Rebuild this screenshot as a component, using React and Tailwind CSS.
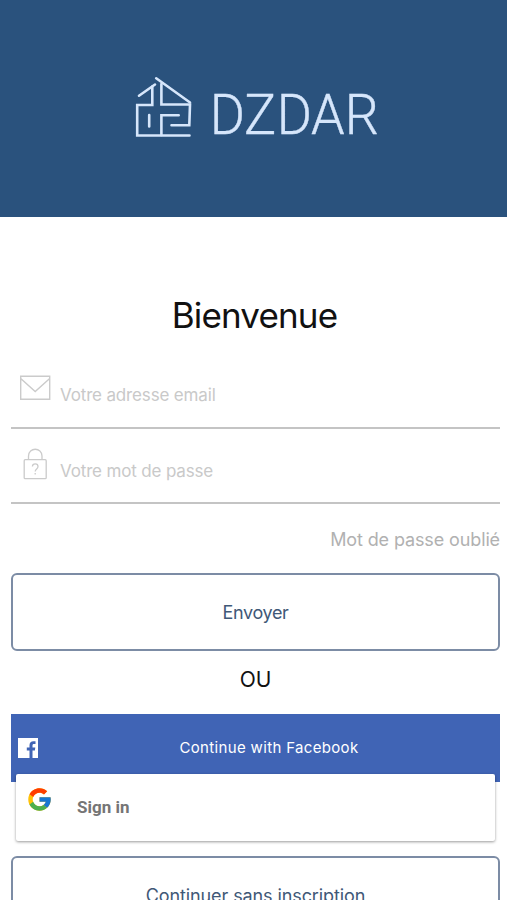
import { FcGoogle } from "react-icons/fc";

function Logo() {
  return (
    <svg
      viewBox="0 0 250 70"
      className="h-[70px] w-[250px] overflow-visible"
      fill="none"
      stroke="#d6e6fb"
      strokeWidth="2.6"
      strokeLinecap="round"
    >
      <path d="M8 24.7 24 13.5M25.2 7.3 59 31.5" />
      <path d="M21.3 15.5V34H6.2V64.5H58.5" />
      <path d="M30.4 13V33.5H59L58.3 54.3H40.5" />
      <path d="M47.7 44.2H30.4V64M18.2 44V55.5" />
      <text
        transform="translate(0 63.3) scale(0.96 1)"
        x="82 117.6 151.9 187.5 222.6"
        y="0"
        fill="#d6e6fb"
        strokeWidth="0.4"
        className="font-['Roboto',sans-serif] text-[56px] font-light"
      >
        DZDAR
      </text>
    </svg>
  );
}

function MailIcon() {
  return (
    <svg viewBox="0 0 32 26" className="h-[26px] w-8" fill="none" stroke="#cbcbcb" strokeWidth="1.4">
      <path d="M0.7 1.2H29.7V24.3H0.7ZM0.7 3.5 15.2 16.5 29.7 3.5" />
    </svg>
  );
}

function LockIcon() {
  return (
    <svg viewBox="0 0 24 32" className="ml-[3px] h-8 w-6" fill="none" stroke="#cbcbcb" strokeWidth="1.3">
      <rect x="1.2" y="11.7" width="22" height="19" rx="1" />
      <path d="M5.5 11.7V8C5.5 -1 19 -1 19 8V11.7" />
      <path d="M9.4 18.5C9.6 15 15 15 15 18.6C15 21.2 12.2 20.8 12.2 23.6M12.2 24.9V26.4" />
    </svg>
  );
}

function Field({ icon, placeholder, className }) {
  return (
    <div className={`flex border-b-2 border-[#c4c4c4] pl-[9px] ${className}`}>
      <span className="w-10 shrink-0">{icon}</span>
      <span className="text-[17px] leading-5 tracking-[-0.16px] text-[#c9c9c9]">
        {placeholder}
      </span>
    </div>
  );
}

export default function App() {
  return (
    <main className="h-[900px] overflow-hidden bg-white font-['Inter',sans-serif]">
      <header className="flex h-[217px] justify-center bg-[#2a527d] pt-[71px] pl-1">
        <Logo />
      </header>

      <div className="pr-[7px] pl-[11px]">
        <h1 className="mt-[78px] pr-[2px] text-center text-[35px] leading-10 tracking-[-0.85px] text-[#111]">
          Bienvenue
        </h1>

        <Field
          className="mt-[40px] h-[54px] [&>span:last-child]:mt-[10px]"
          icon={<MailIcon />}
          placeholder="Votre adresse email"
        />
        <Field
          className="mt-[19px] h-[56px] [&>span:last-child]:mt-[13px]"
          icon={<LockIcon />}
          placeholder="Votre mot de passe"
        />

        <p className="mt-[24px] text-right text-[18px] leading-6 tracking-[-0.12px] text-[#b1b1b1]">
          Mot de passe oublié
        </p>

        <button className="mt-[21px] flex h-[78px] w-full items-center justify-center rounded-[6px] border-2 border-[#7c8ca5] text-[18px] tracking-[-0.35px] text-[#3f5877]">
          Envoyer
        </button>

        <p className="mt-[17px] text-center text-[21px] leading-6 tracking-[-0.2px] text-[#111]">
          OU
        </p>

        <button className="mt-[22px] flex h-[68px] w-full items-center bg-[#4064b5] pl-[7px] text-white">
          <svg viewBox="0 0 20 20" className="size-5 shrink-0">
            <path fill="#fff" d="M0 0H20V20H0Z" />
            <path
              fill="#4064b5"
              d="M11.5 20V12.5H8.8V9.5H11.5V7.2C11.5 4.4 13.1 3.2 15.4 3.2H17.5V6H16C14.9 6 14.5 6.5 14.5 7.5V9.5H17.3L16.9 12.5H14.5V20Z"
            />
          </svg>
          <span className="grow text-center text-[15px] tracking-[0.34px]">
            Continue with Facebook
          </span>
        </button>

        <button className="relative mx-[5px] -mt-2 flex h-[67px] w-[479px] rounded-[2px] bg-white pl-[10px] shadow-[0_1px_3px_rgba(0,0,0,0.4)]">
          <FcGoogle className="mt-[12px] size-[27px]" />
          <span className="mt-[21px] ml-6 font-['Roboto',sans-serif] text-[17px] leading-6 font-bold text-[#757575]">
            Sign in
          </span>
        </button>

        <button className="mt-[15px] flex h-[78px] w-full items-center justify-center rounded-[6px] border-2 border-[#7c8ca5] text-[18px] tracking-[-0.1px] text-[#3f5877]">
          Continuer sans inscription
        </button>
      </div>
    </main>
  );
}
